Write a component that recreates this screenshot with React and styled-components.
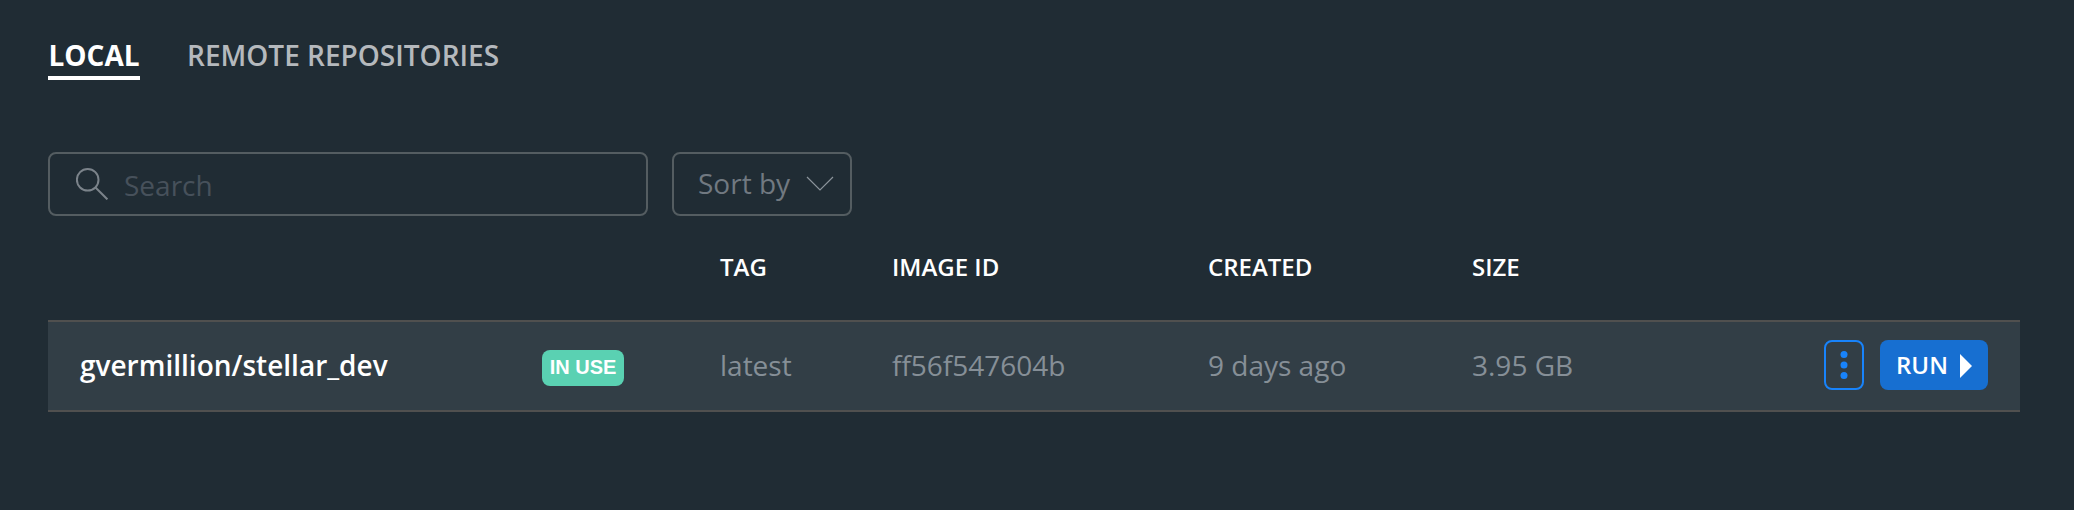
import React from "react";
import styled, { createGlobalStyle } from "styled-components";

const GlobalStyle = createGlobalStyle`
  * { box-sizing: border-box; }
  body {
    margin: 0;
    background: #202c34;
    font-family: "Open Sans", "Noto Sans", sans-serif;
  }
  button, input { font-family: inherit; }
`;

const Page = styled.main`
  width: 2074px;
  height: 510px;
  padding: 36px 54px 0 48px;
  background: #202c34;
  overflow: hidden;
`;

const Tabs = styled.nav`
  display: flex;
  gap: 47px;
`;

const Tab = styled.button`
  min-width: 92px;
  height: 44px;
  padding: 1px 0 3px;
  border: 0;
  border-bottom: 4px solid ${(p) => (p.$active ? "#fff" : "transparent")};
  background: none;
  color: ${(p) => (p.$active ? "#fff" : "#b5b9bd")};
  font-size: 28px;
  font-weight: ${(p) => (p.$active ? 700 : 600)};
  line-height: 36px;
  white-space: nowrap;
`;

const Toolbar = styled.div`
  display: flex;
  gap: 24px;
  margin-top: 72px;
`;

const SearchBox = styled.label`
  display: flex;
  align-items: center;
  width: 600px;
  height: 64px;
  padding-left: 26px;
  border: 2px solid #545d61;
  border-radius: 8px;
`;

const SearchInput = styled.input`
  flex: 1;
  height: 60px;
  margin-left: 16px;
  padding: 2px 0 0;
  border: 0;
  outline: 0;
  background: none;
  color: #fff;
  font-size: 28px;
  &::placeholder { color: #47515b; opacity: 1; }
`;

const SortButton = styled.button`
  display: flex;
  align-items: center;
  justify-content: space-between;
  width: 180px;
  height: 64px;
  padding: 0 16px 2px 24px;
  border: 2px solid #545d61;
  border-radius: 8px;
  background: none;
  color: #717981;
  font-size: 28px;

  svg { margin-top: 2px; }
`;

const columns = "24px 462px 186px 172px 316px 264px 344px 1fr";

const HeaderRow = styled.div`
  display: grid;
  grid-template-columns: ${columns};
  align-items: center;
  height: 104px;
  padding: 0 32px 3px 0;
`;

const HeaderCell = styled.div`
  grid-column: ${(p) => p.$column};
  color: #fff;
  font-size: 24px;
  font-weight: 600;
  white-space: nowrap;
`;

const ImageRow = styled.div`
  display: grid;
  grid-template-columns: ${columns};
  align-items: center;
  width: 1972px;
  height: 92px;
  padding-right: 32px;
  border: solid #50504f;
  border-width: 2px 0;
  background: #323e46;
`;

const Name = styled.div`
  grid-column: 2;
  padding: 0 0 2px 8px;
  color: #fff;
  font-size: 28px;
  font-weight: 600;
`;

const Badge = styled.span`
  display: flex;
  align-items: center;
  justify-content: center;
  width: 82px;
  height: 36px;
  margin: 4px 0 0 8px;
  padding-bottom: 2px;
  border-radius: 8px;
  background: #5ad1b2;
  color: #fff;
  font: 700 20px "Liberation Sans", Arial, sans-serif;
  white-space: nowrap;
`;

const Cell = styled.div`
  grid-column: ${(p) => p.$column};
  padding-bottom: 2px;
  color: #868f97;
  font-size: 28px;
  white-space: nowrap;
`;

const Actions = styled.div`
  grid-column: 8;
  display: flex;
  justify-content: flex-end;
  gap: 16px;
  margin-top: -2px;
`;

const MenuButton = styled.button`
  display: flex;
  align-items: center;
  justify-content: center;
  width: 40px;
  height: 50px;
  padding: 0;
  border: 2px solid #1883fb;
  border-radius: 8px;
  background: none;
`;

const RunButton = styled.button`
  display: flex;
  align-items: center;
  justify-content: space-between;
  width: 108px;
  height: 50px;
  padding: 0 16px 1px;
  border: 0;
  border-radius: 8px;
  background: #176fd1;
  color: #fff;
  font-size: 24px;
  font-weight: 600;

  svg { margin-top: 3px; }
`;

const SearchIcon = () => (
  <svg width="32" height="32" viewBox="0 0 32 32" fill="none" stroke="#7b838a" strokeWidth="2">
    <circle cx="11.7" cy="11.8" r="10.8" />
    <path d="M19.5 19.5 31.4 31.4" />
  </svg>
);

const ChevronIcon = () => (
  <svg width="28" height="16" viewBox="0 0 28 16" fill="none" stroke="#8b949b" strokeWidth="1.2">
    <path d="M1 1 14 14 27 1" />
  </svg>
);

const DotsIcon = () => (
  <svg width="8" height="30" viewBox="0 0 8 30" fill="#1883fb">
    <circle cx="4" cy="4.5" r="3.5" />
    <circle cx="4" cy="15" r="3.5" />
    <circle cx="4" cy="25.5" r="3.5" />
  </svg>
);

const PlayIcon = () => (
  <svg width="12" height="24" viewBox="0 0 12 24" fill="#fff">
    <path d="M0 0 12 12 0 24Z" />
  </svg>
);

export default function App() {
  return (
    <>
      <GlobalStyle />
      <Page>
        <Tabs>
          <Tab $active>LOCAL</Tab>
          <Tab>REMOTE REPOSITORIES</Tab>
        </Tabs>
        <Toolbar>
          <SearchBox>
            <SearchIcon />
            <SearchInput placeholder="Search" />
          </SearchBox>
          <SortButton>
            Sort by
            <ChevronIcon />
          </SortButton>
        </Toolbar>
        <HeaderRow>
          <HeaderCell $column={4}>TAG</HeaderCell>
          <HeaderCell $column={5}>IMAGE ID</HeaderCell>
          <HeaderCell $column={6}>CREATED</HeaderCell>
          <HeaderCell $column={7}>SIZE</HeaderCell>
        </HeaderRow>
        <ImageRow>
          <Name>gvermillion/stellar_dev</Name>
          <Badge>IN USE</Badge>
          <Cell $column={4}>latest</Cell>
          <Cell $column={5}>ff56f547604b</Cell>
          <Cell $column={6}>9 days ago</Cell>
          <Cell $column={7}>3.95 GB</Cell>
          <Actions>
            <MenuButton aria-label="More actions">
              <DotsIcon />
            </MenuButton>
            <RunButton>
              RUN
              <PlayIcon />
            </RunButton>
          </Actions>
        </ImageRow>
      </Page>
    </>
  );
}
